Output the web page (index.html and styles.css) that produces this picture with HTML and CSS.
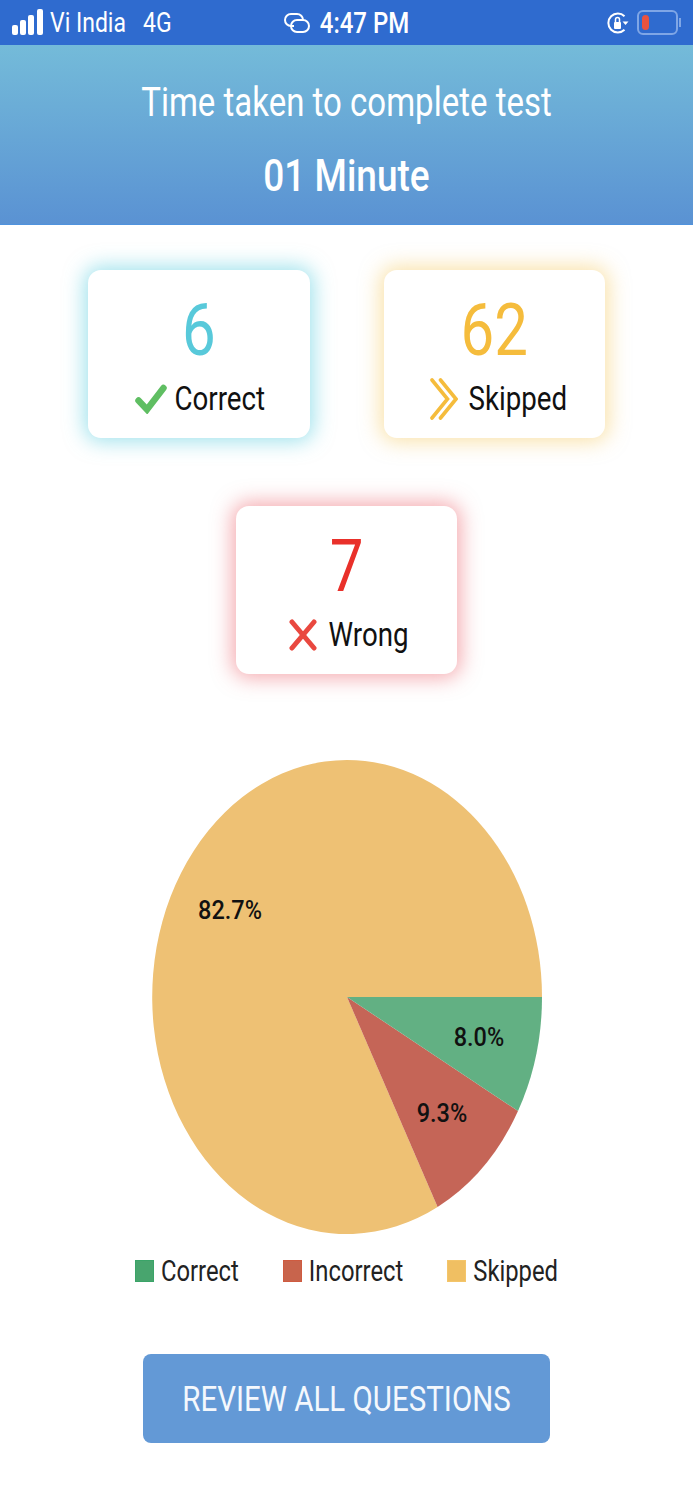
FILE: index.html
```html
<!DOCTYPE html>
<html lang="en">
<head>
<meta charset="utf-8">
<title>Test result</title>
<link rel="stylesheet" href="styles.css">
</head>
<body>
<div class="status">
  <div class="status-left">
    <svg class="signal" width="32" height="26" viewBox="0 0 32 26"><rect x="0" y="16" width="6" height="10" rx="2"/><rect x="8" y="11" width="6" height="15" rx="2"/><rect x="16" y="6" width="6" height="20" rx="2"/><rect x="25" y="0" width="6" height="26" rx="2"/></svg>
    <span class="st carrier">Vi India</span>
    <span class="st net">4G</span>
  </div>
  <div class="status-mid">
    <svg class="link" width="26" height="20" viewBox="0 0 26 20" fill="none" stroke="#fff" stroke-width="2"><path d="M10 13H7A6 6 0 0 1 7 1h6a6 6 0 0 1 6 6"/><path d="M7 13a6 6 0 0 0 6 6h6a6 6 0 0 0 0-12h-6a6 6 0 0 0-6 6z"/></svg>
    <span class="st time">4:47 PM</span>
  </div>
  <div class="status-right">
    <svg class="lock" width="22" height="22" viewBox="0 0 22 22" fill="none"><path d="M17.500 4.200A9.500 9.500 0 1 0 17.500 17.800" stroke="#fff" stroke-width="2"/><path d="M15.500 9.500h6l-3 3.500z" fill="#fff"/><rect x="7" y="10" width="7" height="7" rx="1" fill="#fff"/><path d="M8.500 10.500V7.500a2 2 0 0 1 4 0v3" stroke="#fff" stroke-width="1.500"/></svg>
    <div class="battery"><div class="charge"></div></div>
    <div class="nub"></div>
  </div>
</div>

<header class="banner">
  <div class="tall banner-title">Time taken to complete test</div>
  <div class="tall banner-value">01 Minute</div>
</header>

<main>
  <section class="cards">
    <div class="card card-cyan">
      <div class="tall num num-cyan">6</div>
      <div class="label label-cyan">
        <svg class="ic" width="32" height="30" viewBox="0 0 32 30" fill="none" stroke="#5fbe62" stroke-width="6.500" stroke-linecap="round" stroke-linejoin="miter"><path d="M3.500 16.500L12 25.500L28.500 4"/></svg>
        <span class="tall lbl">Correct</span>
      </div>
    </div>
    <div class="card card-yellow">
      <div class="tall num num-yellow">62</div>
      <div class="label label-yellow">
        <svg class="ic" width="28" height="42" viewBox="0 0 28 42" fill="none" stroke="#f5bc3c" stroke-width="3.600" stroke-linecap="round"><path d="M2 2L17.500 21L2 40"/><path d="M10.500 2L26 21L10.500 40"/></svg>
        <span class="tall lbl">Skipped</span>
      </div>
    </div>
    <div class="card card-red">
      <div class="tall num num-red">7</div>
      <div class="label label-red">
        <svg class="ic" width="28" height="32" viewBox="0 0 28 32" fill="none" stroke="#e9483f" stroke-width="5" stroke-linecap="round"><path d="M3 3L25 29"/><path d="M25 3L3 29"/></svg>
        <span class="tall lbl">Wrong</span>
      </div>
    </div>
  </section>

  <svg class="pie" width="390" height="475" viewBox="0 0 390 475">
    <path class="s-skip" d="M195 237 L195 0 A195 237 0 0 1 390 237 Z"/>
    <path class="s-skip" d="M195 237 L285.600 447 A195 237 0 1 1 195 0 Z"/>
    <path class="s-wrong" d="M195 237 L366 351 A195 237 0 0 1 285.600 447 Z"/>
    <path class="s-right" d="M195 237 L390 237 A195 237 0 0 1 366 351 Z"/>
    <text class="pie-text" transform="translate(78 159) scale(1 1.1)" text-anchor="middle">82.7%</text>
    <text class="pie-text" transform="translate(327 286) scale(1 1.1)" text-anchor="middle">8.0%</text>
    <text class="pie-text" transform="translate(290 362) scale(1 1.1)" text-anchor="middle">9.3%</text>
  </svg>

  <div class="legend">
    <div class="legend-item"><span class="swatch sw-right"></span><span class="tall legend-text">Correct</span></div>
    <div class="legend-item"><span class="swatch sw-wrong"></span><span class="tall legend-text">Incorrect</span></div>
    <div class="legend-item"><span class="swatch sw-skip"></span><span class="tall legend-text">Skipped</span></div>
  </div>

  <button class="review" type="button"><span class="tall review-text">REVIEW ALL QUESTIONS</span></button>
</main>
</body>
</html>
```
FILE: styles.css
```css
* { box-sizing: border-box; }
html, body { margin: 0; padding: 0; background: #fff; }
body { font-family: Roboto, "Liberation Sans", sans-serif; color: #111; width: 693px; height: 1500px; overflow: hidden; }

.tall { display: inline-block; transform: scaleY(1.217); transform-origin: center; white-space: nowrap; }

.status { height: 45px; background: #2f6bcf; display: grid; grid-template-columns: 1fr auto 1fr; align-items: center; padding: 0 12px; color: #fff; }
.status-left { display: flex; align-items: center; }
.signal { fill: #fff; transform: translateY(-1px); }
.st { display: inline-block; transform: scaleY(1.217); font-size: 23px; line-height: 30px; }
.carrier { margin-left: 6px; font-weight: 400; }
.net { margin-left: 17px; font-weight: 400; }
.status-mid { display: flex; align-items: center; gap: 10px; }
.time { font-weight: 500; font-size: 24px; }
.status-right { display: flex; align-items: center; justify-content: flex-end; }
.lock { margin-right: 8px; }
.battery { width: 41px; height: 25px; border: 2px solid #7fa6e6; border-radius: 6px; padding: 3px; }
.charge { width: 7px; height: 100%; background: #ea5340; border-radius: 4px; }
.nub { width: 2px; height: 9px; background: #7fa6e6; margin-left: 1px; }

.banner { height: 180px; background: linear-gradient(180deg, #74bbd9 0%, #5a92d3 100%); border-bottom: 1px solid #4f93de; color: #fff; text-align: center; display: flex; flex-direction: column; align-items: center; padding-top: 34px; }
.banner-title { font-size: 33px; font-weight: 400; line-height: 48px; }
.banner-value { font-size: 37px; font-weight: 500; line-height: 48px; margin-top: 25px; }

main { display: flex; flex-direction: column; align-items: center; }

.cards { display: grid; grid-template-columns: 221.500px 221.500px; column-gap: 74px; row-gap: 68px; margin-top: 45px; justify-content: center; }
.card { height: 168px; background: #fff; border-radius: 13px; display: flex; flex-direction: column; align-items: center; }
.card-cyan { box-shadow: 0 0 20px 4px rgba(88, 204, 222, 0.55); }
.card-yellow { box-shadow: 0 0 20px 4px rgba(246, 200, 90, 0.5); }
.card-red { box-shadow: 0 0 20px 4px rgba(235, 90, 100, 0.5); grid-column: 1 / span 2; justify-self: center; width: 221.500px; }

.num { font-size: 60px; line-height: 70px; margin-top: 26px; font-weight: 400; }
.num-cyan { color: #58c9da; }
.num-yellow { color: #f5bc3c; }
.num-red { color: #e9302a; }

.label { display: flex; align-items: center; height: 44px; margin-top: 11px; }
.label-cyan { gap: 7px; padding-left: 3px; }
.label-yellow { gap: 10px; padding-left: 9px; }
.label-red { gap: 11px; padding-left: 5px; }
.lbl { font-size: 27.700px; line-height: 40px; color: #111; }

.pie { display: block; margin-top: 86px; }
.s-skip { fill: #eec174; }
.s-wrong { fill: #c56557; }
.s-right { fill: #62b083; }
.pie-text { font-family: Roboto, sans-serif; font-size: 23.500px; font-weight: 500; fill: #111; }

.legend { display: flex; gap: 44px; margin-top: 19px; height: 34px; align-items: center; }
.legend-item { display: flex; align-items: center; gap: 7px; }
.swatch { width: 19px; height: 22px; display: block; border: 1px solid; }
.sw-right { background: #48a56e; border-color: #3aa468; }
.sw-wrong { background: #c8644c; border-color: #cf5b40; }
.sw-skip { background: #f0bf62; border-color: #f4c56a; }
.legend-text { font-size: 23.800px; line-height: 34px; font-weight: 400; color: #222; }

.review { display: block; width: 407px; height: 89px; margin-top: 66px; background: #6399d6; border: 0; border-radius: 8px; color: #fff; font-family: inherit; padding: 0; }
.review-text { font-size: 29.500px; font-weight: 400; line-height: 40px; color: #f4f8fd; }
```
